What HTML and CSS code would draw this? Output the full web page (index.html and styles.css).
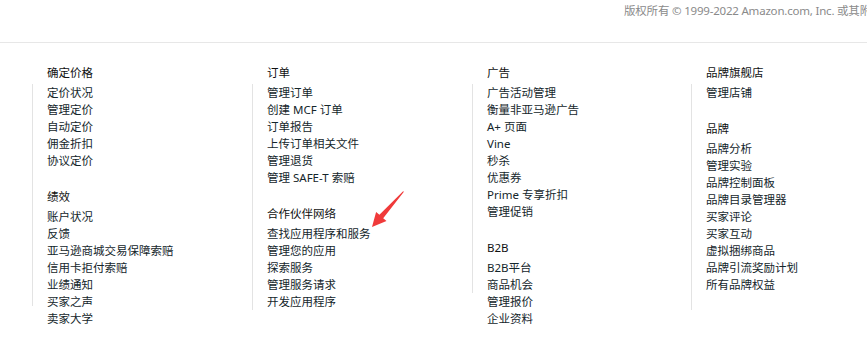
FILE: index.html
```html
<!DOCTYPE html>
<html lang="zh-CN">
<head>
    <meta charset="UTF-8">
    <meta name="viewport" content="width=device-width, initial-scale=1.0">
    <title>卖家平台 - 网站地图</title>
    <link rel="stylesheet" href="styles.css">
</head>
<body>
    <div class="top-bar">
        <p class="copyright">版权所有 © 1999-2022 Amazon.com, Inc. 或其附属公司</p>
    </div>
    <div class="sitemap">
        <div class="column rule-a">
            <div class="group">
                <h3>确定价格</h3>
                <ul>
                    <li><a href="#">定价状况</a></li>
                    <li><a href="#">管理定价</a></li>
                    <li><a href="#">自动定价</a></li>
                    <li><a href="#">佣金折扣</a></li>
                    <li><a href="#">协议定价</a></li>
                </ul>
            </div>
            <div class="group">
                <h3>绩效</h3>
                <ul>
                    <li><a href="#">账户状况</a></li>
                    <li><a href="#">反馈</a></li>
                    <li><a href="#">亚马逊商城交易保障索赔</a></li>
                    <li><a href="#">信用卡拒付索赔</a></li>
                    <li><a href="#">业绩通知</a></li>
                    <li><a href="#">买家之声</a></li>
                    <li><a href="#">卖家大学</a></li>
                </ul>
            </div>
        </div>
        <div class="column rule-b">
            <div class="group">
                <h3>订单</h3>
                <ul>
                    <li><a href="#">管理订单</a></li>
                    <li><a href="#">创建 MCF 订单</a></li>
                    <li><a href="#">订单报告</a></li>
                    <li><a href="#">上传订单相关文件</a></li>
                    <li><a href="#">管理退货</a></li>
                    <li><a href="#">管理 SAFE-T 索赔</a></li>
                </ul>
            </div>
            <div class="group">
                <h3>合作伙伴网络</h3>
                <ul>
                    <li><a href="#">查找应用程序和服务</a></li>
                    <li><a href="#">管理您的应用</a></li>
                    <li><a href="#">探索服务</a></li>
                    <li><a href="#">管理服务请求</a></li>
                    <li><a href="#">开发应用程序</a></li>
                </ul>
            </div>
            <svg class="pointer" width="45" height="45" viewBox="0 0 45 45">
                <polygon points="7,42 21.5,36.1 18.2,33.2 38.9,6.8 38.1,6.2 14.4,29.8 11.1,26.9" fill="#f03a3a"/>
            </svg>
        </div>
        <div class="column rule-c">
            <div class="group">
                <h3>广告</h3>
                <ul>
                    <li><a href="#">广告活动管理</a></li>
                    <li><a href="#">衡量非亚马逊广告</a></li>
                    <li><a href="#">A+ 页面</a></li>
                    <li><a href="#">Vine</a></li>
                    <li><a href="#">秒杀</a></li>
                    <li><a href="#">优惠券</a></li>
                    <li><a href="#">Prime 专享折扣</a></li>
                    <li><a href="#">管理促销</a></li>
                </ul>
            </div>
            <div class="group">
                <h3>B2B</h3>
                <ul>
                    <li><a href="#">B2B平台</a></li>
                    <li><a href="#">商品机会</a></li>
                    <li><a href="#">管理报价</a></li>
                    <li><a href="#">企业资料</a></li>
                </ul>
            </div>
        </div>
        <div class="column rule-b">
            <div class="group">
                <h3>品牌旗舰店</h3>
                <ul>
                    <li><a href="#">管理店铺</a></li>
                </ul>
            </div>
            <div class="group">
                <h3>品牌</h3>
                <ul>
                    <li><a href="#">品牌分析</a></li>
                    <li><a href="#">管理实验</a></li>
                    <li><a href="#">品牌控制面板</a></li>
                    <li><a href="#">品牌目录管理器</a></li>
                    <li><a href="#">买家评论</a></li>
                    <li><a href="#">买家互动</a></li>
                    <li><a href="#">虚拟捆绑商品</a></li>
                    <li><a href="#">品牌引流奖励计划</a></li>
                    <li><a href="#">所有品牌权益</a></li>
                </ul>
            </div>
        </div>
    </div>
</body>
</html>
```

FILE: styles.css
```css
* {
    margin: 0;
    padding: 0;
    box-sizing: border-box;
}
body {
    font-family: "Noto Sans", "Noto Sans CJK SC", sans-serif;
    font-size: 11.5px;
    line-height: 17px;
    color: #0f1111;
    background: #fff;
    overflow: hidden;
}
.top-bar {
    height: 43px;
    border-bottom: 1px solid #e7e7e7;
    overflow: hidden;
}
.copyright {
    margin-left: 624px;
    padding-top: 2px;
    white-space: nowrap;
    color: #8a8a8a;
    font-size: 11.5px;
    letter-spacing: -0.2px;
}
.sitemap {
    display: grid;
    grid-template-columns: 220px 220px 219px 176px;
    padding-left: 32px;
    padding-top: 21px;
}
.column {
    position: relative;
    padding-left: 15px;
}
/* thin grey rule beside the link lists */
.column::before {
    content: "";
    position: absolute;
    left: 0;
    top: 20px;
    width: 1px;
    height: 226px;
    background: #e3e3e3;
}
.rule-a::before {
    height: 222px;
}
.rule-c::before {
    height: 209px;
}
.group {
    margin-bottom: 19px;
}
.group h3 {
    font-size: 11.5px;
    font-weight: 400;
    line-height: 17px;
    margin-bottom: 3px;
    color: #0f1111;
}
.group ul {
    list-style: none;
}
.group a {
    color: #14262b;
    text-decoration: none;
}
.pointer {
    position: absolute;
    left: 113px;
    top: 121px;
}
```
